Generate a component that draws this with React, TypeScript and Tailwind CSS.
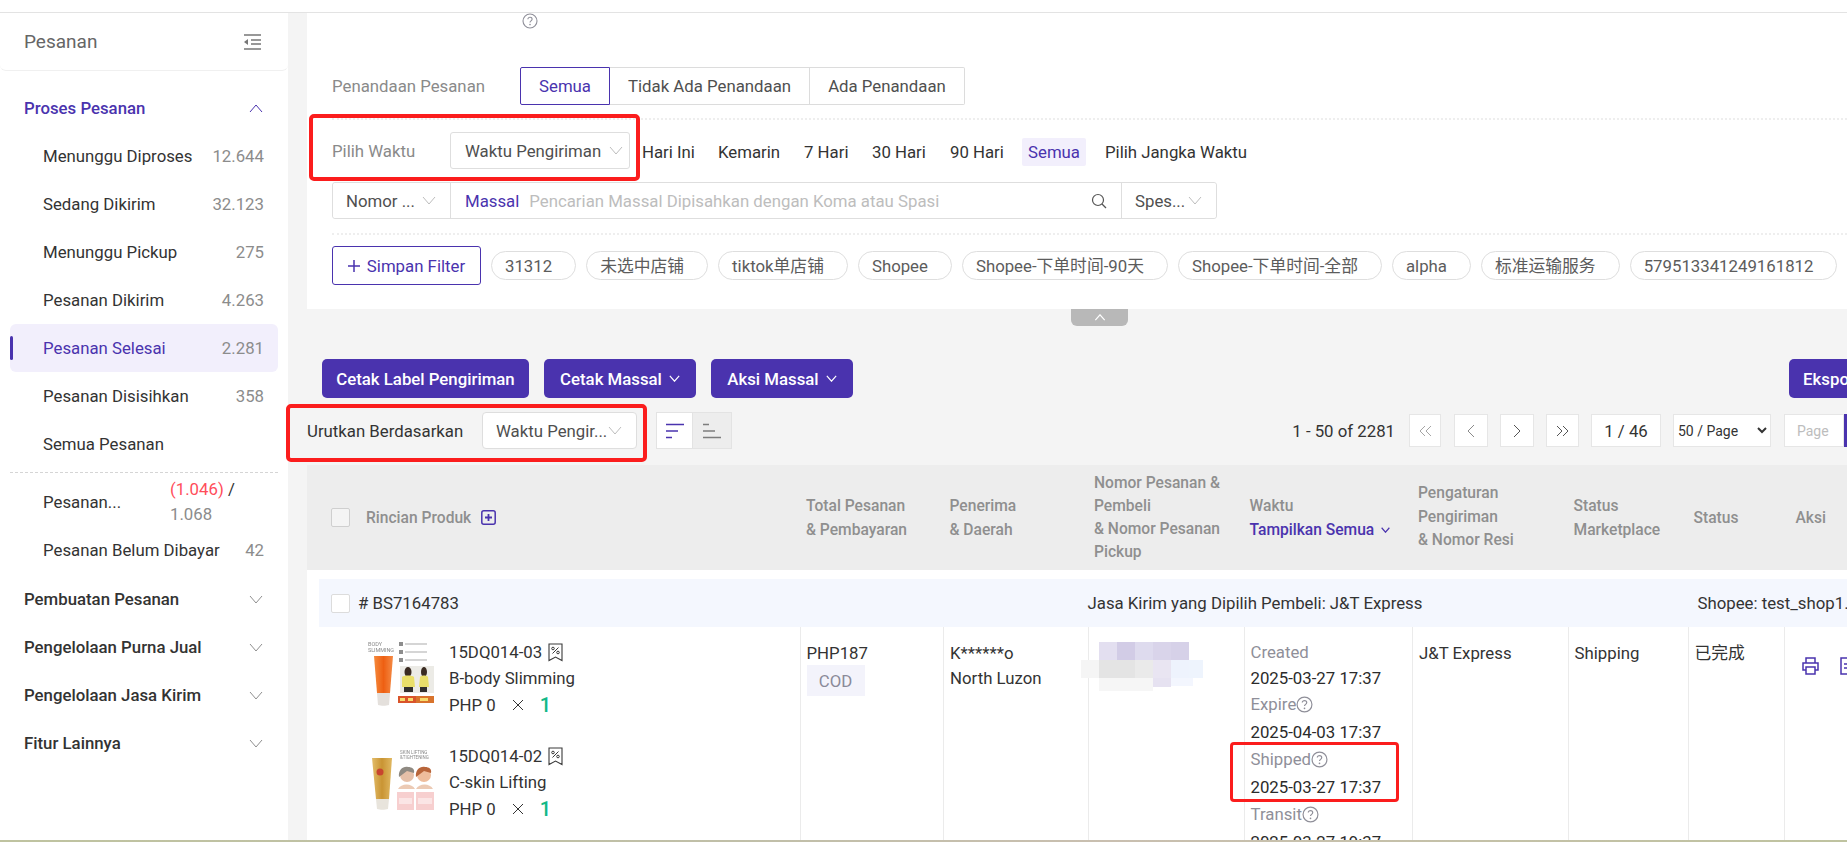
import React from "react";

const P = "#4a33ae";

const Chev = ({ up = false, c = "#a8a8a8", w = 14, h = 9, s = 1 }: { up?: boolean; c?: string; w?: number; h?: number; s?: number }) => (
  <svg width={w} height={h} viewBox="0 0 14 9" fill="none" className="shrink-0">
    <path d={up ? "M1 8L7 1l6 7" : "M1 1l6 7 6-7"} stroke={c} strokeWidth={s} />
  </svg>
);

const Help = ({ size = 17 }: { size?: number }) => (
  <svg width={size} height={size} viewBox="0 0 16 16" fill="none" className="shrink-0">
    <circle cx="8" cy="8" r="7" stroke="#8f8f99" strokeWidth="1.1" />
    <path d="M5.9 6.2C5.9 5 6.9 4.3 8 4.3c1.200 0 2.100.8 2.100 1.900 0 1.700-2.100 1.700-2.100 3.300" stroke="#8f8f99" strokeWidth="1.1" />
    <circle cx="8" cy="11.600" r=".8" fill="#8f8f99" />
  </svg>
);

const Bookmark = () => (
  <svg width="15" height="19" viewBox="0 0 15 19" fill="none" className="shrink-0 ml-[6px]">
    <path d="M1 1h13v16.500l-6.500-3.500L1 17.500z" stroke="#3a3a3a" strokeWidth="1.100" />
    <path d="M4.500 10.500l6-6" stroke="#3a3a3a" />
    <circle cx="5" cy="5.500" r="1.300" stroke="#3a3a3a" />
    <circle cx="10" cy="9.500" r="1.300" stroke="#3a3a3a" />
  </svg>
);

const Item = ({ label, n, active }: { label: string; n: string; active?: boolean }) => (
  <div className={`relative flex h-[48px] items-center justify-between mx-[10px] pl-[33px] pr-[14px] rounded-[6px] ${active ? "bg-[#f2effc] text-[#4a33ae]" : "text-[#333333]"}`}>
    {active && <span className="absolute left-0 top-[12px] h-[24px] w-[3px] rounded-[2px] bg-[#4a33ae]" />}
    <span>{label}</span>
    <span className="text-[#8c8c8c]">{n}</span>
  </div>
);

const Group = ({ label, open }: { label: string; open?: boolean }) => (
  <div className={`flex h-[48px] items-center justify-between pl-[24px] pr-[25px] font-medium ${open ? "text-[#4a33ae]" : "text-[#333333]"}`}>
    <span>{label}</span>
    <Chev up={open} c={open ? "#4a33ae" : "#8f8f8f"} />
  </div>
);

const Select = ({ text, cls }: { text: string; cls: string }) => (
  <div className={`flex items-center justify-between bg-white text-[#4f4f4f] ${cls}`}>
    <span className="truncate pt-[1px]">{text}</span>
    <Chev c="#bdbdbd" />
  </div>
);

const Chip = ({ t }: { t: string }) => (
  <span className="flex h-[29px] shrink-0 items-center rounded-full border border-[#dedede] pl-[13px] pr-[23px] text-[#5c5c5c]">{t}</span>
);

const PageBtn = ({ children, cls = "w-[33px]" }: { children: React.ReactNode; cls?: string }) => (
  <div className={`flex h-[33px] items-center justify-center border border-[#e6e6e6] bg-white text-[#333] ${cls}`}>{children}</div>
);

const PurpleBtn = ({ t, cls, down = true }: { t: string; cls: string; down?: boolean }) => (
  <div className={`flex h-[39px] shrink-0 items-center justify-center gap-[7px] rounded-[5px] bg-[#4a33ae] font-medium text-white ${cls}`}>
    <span>{t}</span>
    {down && <Chev c="#ffffff" w={11} h={7} s={1.500} />}
  </div>
);

const ImgA = () => (
  <svg width="66" height="67" viewBox="0 0 66 67" className="mt-[1px] shrink-0 blur-[0.3px]">
    <defs>
      <linearGradient id="ta" x1="0" x2="1" y1="0" y2="0">
        <stop offset="0" stopColor="#f58a3c" />
        <stop offset=".5" stopColor="#ee5f12" />
        <stop offset="1" stopColor="#f48a45" />
      </linearGradient>
    </defs>
    <text x="0" y="6" fontSize="5.500" fill="#8a8a8a" fontFamily="Roboto">BODY</text>
    <text x="0" y="12" fontSize="5.500" fill="#8a8a8a" fontFamily="Roboto" textLength="26">SLIMMING</text>
    <path d="M6 16h19l-3 37h-13z" fill="url(#ta)" />
    <path d="M9 53h13l-1 12c-3 1-8 1-11 0z" fill="#e4e0dc" />
    {[5, 13, 21].map((y) => (
      <g key={y}>
        <rect x="31" y={y - 3} width="4" height="4" fill="#8d8d8d" />
        <rect x="37" y={y - 2} width="22" height="2" fill="#d5d5d5" />
      </g>
    ))}
    <rect x="32" y="26" width="34" height="27" fill="#ecebe6" />
    <ellipse cx="40" cy="32" rx="3.500" ry="5" fill="#3a2b22" />
    <ellipse cx="56" cy="32" rx="3" ry="5" fill="#3a2b22" />
    <path d="M34 37c2-2 10-2 12 0l1 10h-13z" fill="#eadf6a" />
    <path d="M52 37c1-2 7-2 8 0l1 10h-10z" fill="#eadf6a" />
    <rect x="36" y="47" width="9" height="5" fill="#33302d" />
    <rect x="52" y="47" width="7" height="5" fill="#33302d" />
    <rect x="30" y="56" width="18" height="7" fill="#d9542a" />
    <rect x="48" y="56" width="18" height="7" fill="#d8732c" />
    <rect x="32" y="58" width="5" height="3" fill="#f7dc6c" />
    <rect x="40" y="58" width="5" height="3" fill="#f7dc6c" />
    <rect x="52" y="58" width="8" height="3" fill="#f7dc6c" />
  </svg>
);

const ImgB = () => (
  <svg width="66" height="63" viewBox="0 0 66 63" className="mt-[5px] shrink-0 blur-[0.3px]">
    <defs>
      <linearGradient id="tb" x1="0" x2="1" y1="0" y2="0">
        <stop offset="0" stopColor="#e3bd6a" />
        <stop offset=".5" stopColor="#c99433" />
        <stop offset="1" stopColor="#e0b862" />
      </linearGradient>
    </defs>
    <text x="32" y="6" fontSize="4.500" fill="#8a8a8a" fontFamily="Roboto">SKIN LIFTING</text>
    <text x="32" y="11" fontSize="4.500" fill="#8a8a8a" fontFamily="Roboto">&amp;TIGHTENING</text>
    <path d="M4 10h20l-3 41H8z" fill="url(#tb)" />
    <path d="M8 51h13l-1 10c-3 1-8 1-11 0z" fill="#e8e4dc" />
    <circle cx="12" cy="24" r="3.500" fill="#c8452f" />
    <circle cx="39" cy="27" r="7" fill="#e6c0a8" />
    <path d="M31 29c-1-7 4-11 9-10 4 0 7 2 6 6l-7-2z" fill="#8f8a82" />
    <circle cx="56" cy="27" r="7" fill="#eebd9c" />
    <path d="M48 29c-1-7 4-11 9-10 4 0 7 2 6 6l-7-2z" fill="#b8653a" />
    <path d="M30 41c3-6 14-6 17 0z" fill="#eccab4" />
    <path d="M48 41c3-6 14-6 17 0z" fill="#eccab4" />
    <rect x="29" y="44" width="17" height="18" fill="#f7cfcf" />
    <rect x="48" y="44" width="18" height="18" fill="#f7cfcf" />
    <rect x="31" y="50" width="13" height="6" fill="#fbe5e5" />
    <rect x="50" y="50" width="14" height="6" fill="#fbe5e5" />
  </svg>
);

const Product = ({ code, name, img, mb }: { code: string; name: string; img: React.ReactNode; mb: string }) => (
  <div className={`flex items-start ${mb}`}>
    {img}
    <div className="ml-[15px] text-[#333]">
      <div className="flex h-[26px] items-center">{code}<Bookmark /></div>
      <div className="flex h-[26px] items-center">{name}</div>
      <div className="flex h-[27px] items-center">
        <span>PHP 0</span>
        <svg width="12" height="12" viewBox="0 0 12 12" className="ml-[16px]"><path d="M1 1l10 10M11 1L1 11" stroke="#333" strokeWidth="1" /></svg>
        <span className="ml-[16px] text-[20px] font-medium text-[#12b886]">1</span>
      </div>
    </div>
  </div>
);

const TimeLabel = ({ t, help, h }: { t: string; help?: boolean; h: string }) => (
  <div className={`flex items-center text-[#8f8f99] ${h}`}>{t}{help && <Help />}</div>
);
const TimeVal = ({ t, h }: { t: string; h: string }) => <div className={`flex items-center text-[#2b2b2b] ${h}`}>{t}</div>;

const cols = "grid grid-cols-[492.5px_143.5px_144.5px_156px_168px_156px_120px_96px_64px]";

const tiles: [number, number, number, number, string][] = [
  [0, 18, 18, 18, "#f5f5f5"],
  [18, 0, 18, 18, "#e3dff0"], [36, 0, 18, 18, "#d2cce6"], [54, 0, 18, 18, "#dedbee"], [72, 0, 18, 18, "#d9d4ea"], [90, 0, 18, 18, "#d6d1e8"],
  [18, 18, 18, 18, "#e4e4e4"], [36, 18, 18, 18, "#e4e4e4"], [54, 18, 18, 18, "#eaeaea"], [72, 18, 18, 18, "#e9e5f2"], [90, 18, 18, 18, "#eef3fd"], [108, 18, 14, 18, "#eef4fd"],
  [18, 36, 54, 13, "#f6f6f6"], [72, 36, 18, 9, "#e6e2f1"], [90, 36, 22, 8, "#f3f6fe"],
];

export default function App() {
  return (
    <div className="flex h-[842px] w-[1847px] flex-col overflow-hidden bg-[#f4f4f4] text-[16.8px] leading-[24px] text-[#333]" style={{ fontFamily: 'Roboto, "Noto Sans CJK SC", sans-serif' }}>
      <div className="h-[13px] shrink-0 border-b border-[#e3e3e3] bg-white" />
      <div className="flex min-h-0 flex-1">
        {/* Sidebar */}
        <aside className="w-[288px] shrink-0 bg-white">
          <div className="flex h-[58px] items-center justify-between rounded-b-[6px] border-b border-[#f0f0f0] pl-[24px] pr-[27px]">
            <span className="text-[19px] text-[#666666]">Pesanan</span>
            <svg width="18" height="16" viewBox="0 0 18 16" fill="none">
              <path d="M1 1h17M8 6h10M8 10h10M1 15h17" stroke="#777" strokeWidth="1.500" />
              <path d="M5 5v6L1 8z" fill="#777" />
            </svg>
          </div>
          <div className="mt-[13px]">
            <Group label="Proses Pesanan" open />
            <Item label="Menunggu Diproses" n="12.644" />
            <Item label="Sedang Dikirim" n="32.123" />
            <Item label="Menunggu Pickup" n="275" />
            <Item label="Pesanan Dikirim" n="4.263" />
            <Item label="Pesanan Selesai" n="2.281" active />
            <Item label="Pesanan Disisihkan" n="358" />
            <Item label="Semua Pesanan" n="" />
            <div className="mx-[10px] mt-[4px] border-t border-dashed border-[#d5d5d5]" />
            <div className="mt-[4px] flex h-[49px] items-center pl-[43px] pr-[20px]">
              <span className="w-[127px] shrink-0">Pesanan...</span>
              <span className="leading-[25px] text-[#8c8c8c]"><span className="text-[#ff4d5a]">(1.046)</span> <span className="text-[#333]">/</span><br />1.068</span>
            </div>
            <Item label="Pesanan Belum Dibayar" n="42" />
            <div className="h-[1px]" />
            <Group label="Pembuatan Pesanan" />
            <Group label="Pengelolaan Purna Jual" />
            <Group label="Pengelolaan Jasa Kirim" />
            <Group label="Fitur Lainnya" />
          </div>
        </aside>

        {/* Main */}
        <main className="flex min-w-0 flex-1 flex-col pl-[19px]">
          <section className="relative h-[296px] shrink-0 bg-white pl-[25px] text-[#4f4f4f]">
            <div className="h-[54px] pl-[190px]"><Help size={16} /></div>
            <div className="flex h-[38px] items-center">
              <span className="w-[188px] shrink-0 text-[#8a8a8a]">Penandaan Pesanan</span>
              <div className="flex h-[38px] w-[90px] items-center justify-center rounded-l-[2px] border border-[#4a33ae] text-[#4a33ae]">Semua</div>
              <div className="flex h-[38px] w-[200px] items-center justify-center border-y border-r border-[#dcdcdc]">Tidak Ada Penandaan</div>
              <div className="flex h-[38px] w-[155px] items-center justify-center rounded-r-[2px] border-y border-r border-[#dcdcdc]">Ada Penandaan</div>
            </div>
            <div className="mt-[13px] border-t-2 border-dotted border-[#eeeeee]" />
            <div className="mt-[12px] flex h-[37px] items-center">
              <span className="w-[118px] shrink-0 text-[#8a8a8a]">Pilih Waktu</span>
              <Select text="Waktu Pengiriman" cls="h-[37px] w-[180px] rounded-[3px] border border-[#dedede] pl-[14px] pr-[6px]" />
              <div className="ml-[12px] flex items-center pt-[2px] text-[#333]">
                <span className="w-[76px]">Hari Ini</span>
                <span className="w-[86px]">Kemarin</span>
                <span className="w-[68px]">7 Hari</span>
                <span className="w-[78px]">30 Hari</span>
                <span className="w-[72px]">90 Hari</span>
                <span className="flex h-[28px] w-[64px] items-center justify-center rounded-[2px] bg-[#f2effc] text-[#4a33ae]">Semua</span>
                <span className="ml-[19px]">Pilih Jangka Waktu</span>
              </div>
            </div>
            <div className="mt-[13px] flex h-[37px] w-[885px] items-center rounded-[3px] border border-[#dedede]">
              <Select text="Nomor ..." cls="h-[35px] w-[118px] rounded-l-[3px] border-r border-[#dedede] pl-[13px] pr-[14px]" />
              <span className="ml-[14px] pt-[1px] text-[#4a33ae]">Massal</span>
              <span className="ml-[10px] pt-[1px] text-[#bdbdbd]">Pencarian Massal Dipisahkan dengan Koma atau Spasi</span>
              <svg width="16" height="16" viewBox="0 0 16 16" fill="none" className="ml-auto mr-[14px]">
                <circle cx="7" cy="7" r="5.500" stroke="#555" strokeWidth="1.200" />
                <path d="M11 11l4 4" stroke="#555" strokeWidth="1.200" />
              </svg>
              <Select text="Spes..." cls="h-[35px] w-[95px] rounded-r-[3px] border-l border-[#dedede] pl-[13px] pr-[14px]" />
            </div>
            <div className="mt-[14px] border-t-2 border-dotted border-[#eeeeee]" />
            <div className="mt-[11px] flex items-center gap-[10px]">
              <div className="flex h-[39px] w-[149px] shrink-0 items-center justify-center gap-[7px] rounded-[3px] border border-[#4a33ae] text-[#4a33ae]">
                <svg width="12" height="12" viewBox="0 0 12 12"><path d="M6 0v12M0 6h12" stroke={P} strokeWidth="1.500" /></svg>
                Simpan Filter
              </div>
              <Chip t="31312" />
              <Chip t="未选中店铺" />
              <Chip t="tiktok单店铺" />
              <Chip t="Shopee" />
              <Chip t="Shopee-下单时间-90天" />
              <Chip t="Shopee-下单时间-全部" />
              <Chip t="alpha" />
              <Chip t="标准运输服务" />
              <Chip t="579513341249161812" />
            </div>
            {/* annotation + collapse handle */}
            <div className="absolute left-[2px] top-[101px] h-[67px] w-[331px] rounded-[5px] border-[4px] border-[#fb1d1d]" />
            <div className="absolute left-[764px] top-[296px] z-10 flex h-[17px] w-[57px] items-center justify-center rounded-b-[6px] bg-[#b8b8b8]">
              <Chev up c="#ffffff" w={12} h={7} s={1.500} />
            </div>
          </section>

          <div className="relative shrink-0">
            <div className="flex items-center pl-[15px] pt-[50px]">
              <PurpleBtn t="Cetak Label Pengiriman" cls="w-[207px]" down={false} />
              <PurpleBtn t="Cetak Massal" cls="ml-[15px] w-[152px]" />
              <PurpleBtn t="Aksi Massal" cls="ml-[15px] w-[142px]" />
              <PurpleBtn t="Ekspor" cls="ml-auto w-[80px] -mr-[22px] rounded-r-none" down={false} />
            </div>
            <div className="mt-[14px] flex h-[37px] items-center">
              <span className="w-[175px] shrink-0 pt-[1px]">Urutkan Berdasarkan</span>
              <Select text="Waktu Pengir..." cls="h-[37px] w-[155px] rounded-[4px] border border-[#dedede] pl-[13px] pr-[14px]" />
              <div className="ml-[19px] flex h-[37px] w-[37px] items-center justify-center border border-[#e3e3e3] bg-white">
                <svg width="18" height="16" viewBox="0 0 18 16"><path d="M0 1.500h18M0 8h12M0 14.500h6" stroke={P} strokeWidth="1.700" /></svg>
              </div>
              <div className="flex h-[37px] w-[39px] items-center justify-center border-y border-r border-[#e3e3e3] bg-[#ededed]">
                <svg width="18" height="16" viewBox="0 0 18 16"><path d="M0 1.500h6M0 8h12M0 14.500h18" stroke="#7d7d7d" strokeWidth="1.500" /></svg>
              </div>
              <span className="ml-auto">1 - 50 of 2281</span>
              <div className="ml-[14px] flex items-center text-[#8a8a8a]">
                <PageBtn cls="w-[32px]"><svg width="15" height="12" viewBox="0 0 15 12" fill="none"><path d="M7 1L2 6l5 5M13 1L8 6l5 5" stroke="#a5a5a5" /></svg></PageBtn>
                <PageBtn cls="ml-[13px] w-[34px]"><svg width="8" height="14" viewBox="0 0 8 14" fill="none"><path d="M7 1L1 7l6 6" stroke="#8a8a8a" /></svg></PageBtn>
                <PageBtn cls="ml-[12px] w-[34px]"><svg width="8" height="14" viewBox="0 0 8 14" fill="none"><path d="M1 1l6 6-6 6" stroke="#555" /></svg></PageBtn>
                <PageBtn cls="ml-[12px] w-[33px]"><svg width="15" height="12" viewBox="0 0 15 12" fill="none"><path d="M2 1l5 5-5 5M8 1l5 5-5 5" stroke="#555" /></svg></PageBtn>
                <PageBtn cls="ml-[12px] w-[70px]">1 / 46</PageBtn>
                <select defaultValue="50" className="ml-[12px] h-[33px] w-[98px] border border-[#e6e6e6] bg-white text-[14px] text-[#333]">
                  <option value="50">50 / Page</option>
                </select>
                <div className="ml-[13px] flex h-[33px] w-[60px] items-center border border-[#e6e6e6] bg-white pl-[12px] text-[14px] text-[#bdbdbd]">Page</div>
                <div className="h-[33px] w-[3px] bg-[#4a33ae]" />
              </div>
            </div>
            <div className="absolute left-[-21px] top-[95px] h-[58px] w-[361px] rounded-[5px] border-[4px] border-[#fb1d1d]" />
          </div>

          {/* Table head */}
          <div className={`${cols} mt-[16px] h-[105px] shrink-0 items-center bg-[#ededed] text-[15.600px] font-medium text-[#8f8f8f]`}>
            <div className="flex items-center pl-[24px]">
              <span className="h-[19px] w-[19px] rounded-[2px] border border-[#cfcfcf] bg-white/40" />
              <span className="ml-[16px]">Rincian Produk</span>
              <svg width="15" height="15" viewBox="0 0 15 15" fill="none" className="ml-[10px]">
                <rect x=".8" y=".8" width="13.400" height="13.400" rx="2" stroke={P} strokeWidth="1.500" />
                <path d="M7.500 4v7M4 7.500h7" stroke={P} strokeWidth="1.800" />
              </svg>
            </div>
            <div className="pl-[6.500px]">Total Pesanan<br />&amp; Pembayaran</div>
            <div className="pl-[6.500px]">Penerima<br />&amp; Daerah</div>
            <div className="pl-[6.500px] leading-[23px]">Nomor Pesanan &amp;<br />Pembeli<br />&amp; Nomor Pesanan<br />Pickup</div>
            <div className="pl-[6px]">
              Waktu
              <div className="flex items-center gap-[7px] text-[#4a33ae]">Tampilkan Semua<Chev c={P} w={9} h={6} s={1.800} /></div>
            </div>
            <div className="pl-[6.500px] leading-[23.500px]">Pengaturan<br />Pengiriman<br />&amp; Nomor Resi</div>
            <div className="pl-[6px]">Status<br />Marketplace</div>
            <div className="pl-[6px]">Status</div>
            <div className="pl-[12px]">Aksi</div>
          </div>

          {/* Table body */}
          <div className="relative min-h-0 flex-1 overflow-hidden bg-white">
            <div className="ml-[12px] mt-[9px] flex h-[48px] items-center whitespace-nowrap bg-[#f4f7fe]">
              <span className="ml-[12px] h-[19px] w-[19px] shrink-0 rounded-[2px] border border-[#dcdcdc] bg-white" />
              <span className="ml-[8px] w-[729.500px] shrink-0"># BS7164783</span>
              <span className="w-[610px] shrink-0">Jasa Kirim yang Dipilih Pembeli: J&amp;T Express</span>
              <span className="shrink-0">Shopee: test_shop1...</span>
            </div>
            <div className={`${cols} whitespace-nowrap`}>
              <div className="pl-[61px] pt-[12px]">
                <Product code="15DQ014-03" name="B-body Slimming" img={<ImgA />} mb="mb-[25px]" />
                <Product code="15DQ014-02" name="C-skin Lifting" img={<ImgB />} mb="" />
              </div>
              <div className="border-l border-[#ebebeb] pl-[6px] pt-[14px]">
                PHP187
                <div className="flex h-[31px] w-[58px] items-center justify-center bg-[#f3f3fb] text-[#8a8a99]">COD</div>
              </div>
              <div className="border-l border-[#ebebeb] pl-[6px] pt-[14px] leading-[25px]">K******o<br />North Luzon</div>
              <div className="border-l border-[#ebebeb] pt-[15px]">
                <svg width="123" height="49" viewBox="0 0 123 49" className="-ml-[8px]">
                  {tiles.map(([x, y, w, h, c], i) => <rect key={i} x={x} y={y} width={w} height={h} fill={c} />)}
                </svg>
              </div>
              <div className="border-l border-[#ebebeb] pl-[6px] pt-[12px]">
                <TimeLabel t="Created" h="h-[26px]" />
                <TimeVal t="2025-03-27 17:37" h="h-[25px]" />
                <TimeLabel t="Expire" help h="h-[28px]" />
                <TimeVal t="2025-04-03 17:37" h="h-[27px]" />
                <TimeLabel t="Shipped" help h="h-[28px]" />
                <TimeVal t="2025-03-27 17:37" h="h-[27px]" />
                <TimeLabel t="Transit" help h="h-[28px]" />
                <TimeVal t="2025-03-27 19:37" h="h-[27px]" />
              </div>
              <div className="border-l border-[#ebebeb] pl-[6.500px] pt-[14px]">J&amp;T Express</div>
              <div className="border-l border-[#ebebeb] pl-[6px] pt-[14px]">Shipping</div>
              <div className="border-l border-[#ebebeb] pl-[6px] pt-[14px]">已完成</div>
              <div className="flex gap-[21px] border-l border-[#ebebeb] pl-[17px] pt-[30px]">
                <svg width="17" height="18" viewBox="0 0 17 18" fill="none" className="shrink-0">
                  <path d="M4 6V1h9v5M4 13H1V6h15v7h-3" stroke={P} strokeWidth="1.500" />
                  <rect x="4" y="10" width="9" height="7" stroke={P} strokeWidth="1.500" />
                </svg>
                <svg width="17" height="18" viewBox="0 0 17 18" fill="none" className="shrink-0">
                  <path d="M1 1h15v16H1z" stroke={P} strokeWidth="1.500" />
                  <path d="M4 7h9M4 11h6" stroke={P} strokeWidth="1.500" />
                </svg>
              </div>
            </div>
            <div className="absolute left-[923px] top-[172px] h-[60px] w-[169px] rounded-[4px] border-[3px] border-[#fb1d1d]" />
          </div>
        </main>
      </div>
      <div className="h-[2px] shrink-0 bg-[linear-gradient(90deg,#bfc3a0,#c0bfa8_40%,#c9bfb0_60%,#bfc3a0)]" />
    </div>
  );
}
